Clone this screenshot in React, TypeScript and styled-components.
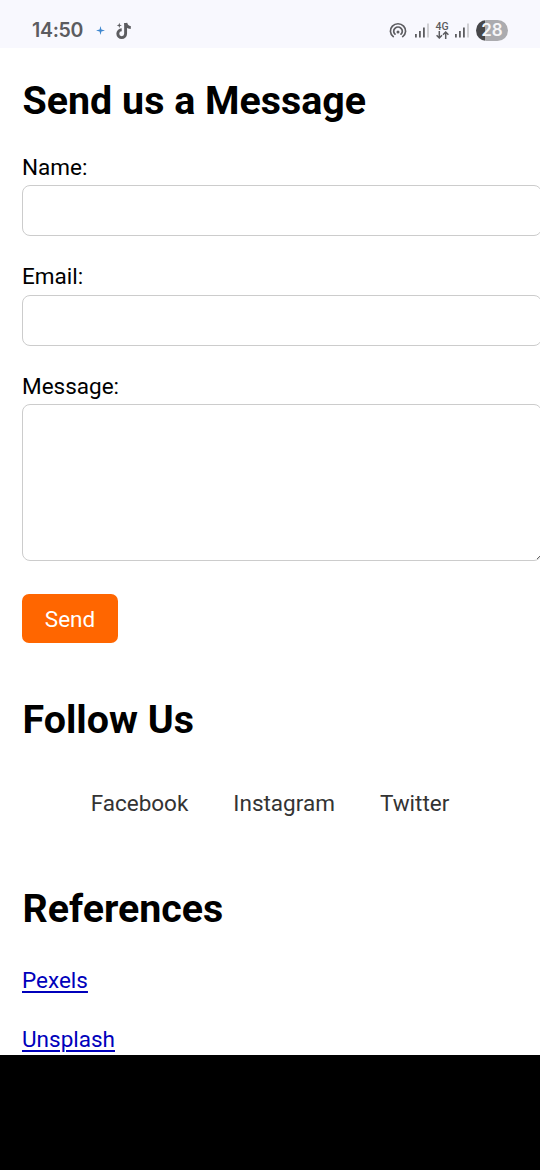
import React from "react";
import styled, { createGlobalStyle } from "styled-components";

const GlobalStyle = createGlobalStyle`
  * { box-sizing: border-box; }
  body {
    margin: 0;
    background: #000;
    font-family: Roboto, "Liberation Sans", sans-serif;
    overflow: hidden;
  }
`;

const Screen = styled.div`
  width: 540px;
  height: 1170px;
  overflow: hidden;
  background: #000;
`;

const StatusBar = styled.header`
  display: flex;
  align-items: center;
  height: 48px;
  padding: 13px 32px 0;
  background: #f8f8fe;
  color: #5c5c60;

  svg { display: block; flex: none; }
`;

const Clock = styled.span`
  width: 64px;
  font: 600 19.5px/35px Inter, sans-serif;
  letter-spacing: -0.3px;
  white-space: nowrap;
`;

const NoteSvg = styled.svg`
  margin-left: 11px;
`;

const StatusIcons = styled.div`
  display: flex;
  align-items: center;
  margin-left: auto;
`;

const SignalSvg = styled.svg<{ $offset: number }>`
  margin-left: ${(p) => p.$offset}px;
`;

const Battery = styled.span`
  width: 32px;
  height: 21px;
  margin-left: 7px;
  border-radius: 11px;
  background: linear-gradient(to right, #47474a 9px, #ababaf 9px);
  color: #f6f6f8;
  font: 600 17px/21px Inter, sans-serif;
  text-align: center;
`;

const Page = styled.main`
  height: 1007px;
  padding: 30px 22px 0;
  background: #fff;
  color: #000;
  overflow: hidden;
`;

const Heading = styled.h2<{ $top?: number }>`
  margin: ${(p) => p.$top ?? 0}px 0 0;
  padding-left: 0.5px;
  font-size: 39.4px;
  line-height: 46px;
  font-weight: 700;
`;

const Form = styled.form`
  width: 520px;
  padding-top: 29px;
`;

const Field = styled.label<{ $gap: number; $labelGap?: number }>`
  display: flex;
  flex-direction: column;
  gap: ${(p) => p.$labelGap ?? 4}px;
  position: relative;
  margin-bottom: ${(p) => p.$gap}px;
  font-size: 22.5px;
  line-height: 28px;
`;

const Input = styled.input`
  width: 520px;
  height: 51px;
  padding: 10px;
  border: 1px solid #ccc;
  border-radius: 8px;
  background: #fff;
  outline: none;
`;

const TextArea = styled.textarea`
  width: 520px;
  height: 157px;
  padding: 10px;
  border: 1px solid #ccc;
  border-radius: 8px;
  background: #fff;
  outline: none;
  resize: none;
`;

const ResizeGrip = styled.svg`
  position: absolute;
  right: 2px;
  bottom: 2px;
`;

const SendButton = styled.button`
  display: block;
  width: 96px;
  height: 49px;
  padding: 1px 0 0;
  border: 0;
  border-radius: 7px;
  background: #f60;
  color: #fff;
  font: 400 22.5px/48px Roboto, sans-serif;
`;

const SocialNav = styled.nav`
  display: flex;
  justify-content: center;
  gap: 45px;
  margin-top: 46px;
  line-height: 28px;
  font-size: 22.5px;
`;

const SocialLink = styled.a`
  color: #333;
  text-decoration: none;
`;

const Reference = styled.p<{ $top: number }>`
  margin: ${(p) => p.$top}px 0 0;
  font-size: 22.5px;
  line-height: 28px;

  a {
    color: #00b;
    text-decoration: underline;
    text-decoration-thickness: 2px;
    text-underline-offset: 3px;
  }
`;

const Sparkle = () => (
  <svg width="9" height="9" viewBox="0 0 9 9" fill="#3f87cf">
    <path d="M4.5 0 5.4 3.6 9 4.5 5.4 5.4 4.5 9 3.6 5.4 0 4.5 3.6 3.6Z" />
  </svg>
);

const NoteIcon = () => (
  <NoteSvg width="16" height="18" viewBox="0 0 16 18" fill="none">
    <path d="M9.6 1v10.7a3.9 3.9 0 1 1-3.9-3.9" stroke="#5c5c60" strokeWidth="2.9" />
    <path d="M9.8 1c.3 2.8 2.2 4.4 5 4.6" stroke="#5c5c60" strokeWidth="2.9" />
    <path d="M3.3.8 4 2.7l1.9.7L4 4.1 3.3 6l-.7-1.9-1.9-.7 1.9-.7Z" fill="#5c5c60" />
  </NoteSvg>
);

const HotspotIcon = () => (
  <svg width="18" height="17" viewBox="0 0 18 17" fill="none" stroke="#5c5c60" strokeWidth="1.7" strokeLinecap="round">
    <path d="M4.3 14.6a7.6 7.2 0 1 1 9.4 0" />
    <path d="M6 12.2a4.3 4.1 0 1 1 6 0" />
    <circle cx="9" cy="10" r="1.5" fill="#5c5c60" stroke="none" />
  </svg>
);

const Signal = ({ offset }: { offset: number }) => (
  <SignalSvg $offset={offset} width="14" height="15" viewBox="0 0 14 15">
    <path d="M0 11h1.8v3.5H0zM4 8h1.8v6.5H4zM8 4.5h1.8v10H8z" fill="#5c5c60" />
    <path d="M12.2 .5h1.6v14h-1.6z" fill="#c6c6ca" />
  </SignalSvg>
);

const NetworkType = styled.span`
  display: flex;
  flex-direction: column;
  align-items: center;
  width: 14px;
  margin-left: 6px;
  font: 500 10.5px/9px Roboto, sans-serif;
`;

const TransferArrows = () => (
  <svg width="13" height="8" viewBox="0 0 13 8" fill="none" stroke="#5c5c60" strokeWidth="1.5">
    <path d="M3.3 0v7M.6 4.3l2.7 2.7L6 4.3M9.7 8V1M7 3.7 9.7 1l2.7 2.7" />
  </svg>
);

export default function App() {
  return (
    <Screen>
      <GlobalStyle />
      <StatusBar>
        <Clock>14:50</Clock>
        <Sparkle />
        <NoteIcon />
        <StatusIcons>
          <HotspotIcon />
          <Signal offset={8} />
          <NetworkType>
            4G
            <TransferArrows />
          </NetworkType>
          <Signal offset={6} />
          <Battery>28</Battery>
        </StatusIcons>
      </StatusBar>
      <Page>
        <Heading>Send us a Message</Heading>
        <Form>
          <Field $gap={26}>
            Name:
            <Input type="text" />
          </Field>
          <Field $gap={26} $labelGap={5}>
            Email:
            <Input type="email" />
          </Field>
          <Field $gap={33}>
            Message:
            <TextArea />
            <ResizeGrip width="3" height="3" viewBox="0 0 3 3" stroke="#666">
              <path d="M0 3 3 0" />
            </ResizeGrip>
          </Field>
          <SendButton type="button">Send</SendButton>
        </Form>
        <Heading $top={54}>Follow Us</Heading>
        <SocialNav>
          <SocialLink>Facebook</SocialLink>
          <SocialLink>Instagram</SocialLink>
          <SocialLink>Twitter</SocialLink>
        </SocialNav>
        <Heading $top={69}>References</Heading>
        <Reference $top={34}>
          <a href="#pexels">Pexels</a>
        </Reference>
        <Reference $top={31}>
          <a href="#unsplash">Unsplash</a>
        </Reference>
      </Page>
    </Screen>
  );
}
